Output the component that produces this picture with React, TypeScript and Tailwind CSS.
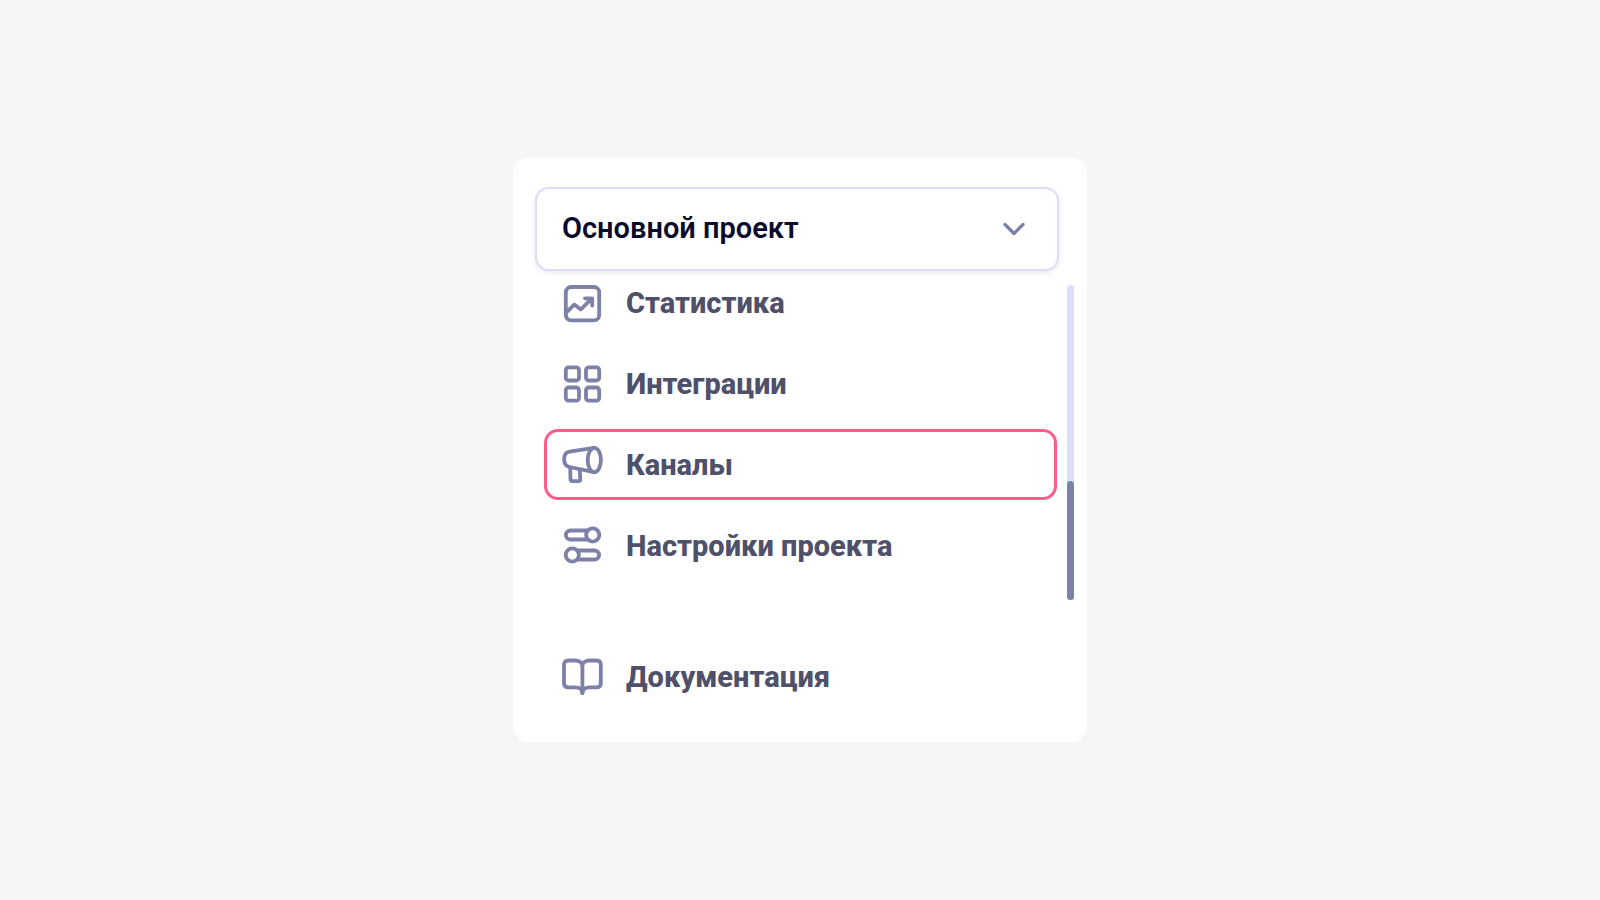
import React from "react";

type MenuItem = {
  id: string;
  title: string;
  icon: React.ReactNode;
  active?: boolean;
};

const Icon: React.FC<{ children: React.ReactNode }> = ({ children }) => (
  <svg
    className="size-[43px] shrink-0 text-[#7d80a8]"
    viewBox="0 0 43 43"
    fill="none"
    stroke="currentColor"
    strokeWidth="3.8"
    strokeLinecap="round"
    strokeLinejoin="round"
    aria-hidden="true"
  >
    {children}
  </svg>
);

const items: MenuItem[] = [
  {
    id: "stats",
    title: "Статистика",
    icon: (
      <Icon>
        <rect x="4.8" y="6" width="33.4" height="33.4" rx="5.4" />
        <path d="M5.5 31.3 L13.3 23.5 L19.8 28.5 L30.5 17.8 M24 17.3 H31.2 V24.5" />
      </Icon>
    ),
  },
  {
    id: "integrations",
    title: "Интеграции",
    icon: (
      <Icon>
        <rect x="4.8" y="5.3" width="13.2" height="13.2" rx="2.8" />
        <rect x="25" y="5.3" width="13.2" height="13.2" rx="2.8" />
        <rect x="4.8" y="25.5" width="13.2" height="13.2" rx="2.8" />
        <rect x="25" y="25.5" width="13.2" height="13.2" rx="2.8" />
      </Icon>
    ),
  },
  {
    id: "channels",
    title: "Каналы",
    active: true,
    icon: (
      <Icon>
        <ellipse cx="33.3" cy="17" rx="6.6" ry="12.2" />
        <path d="M33 4.8 L8.5 8.6 C5 9.2 3.1 12 3.1 16 C3.1 20.2 5 23.2 8.5 24 L33 29.2" />
        <path d="M9.2 24.5 L9.5 36.5 Q9.6 38.2 11.3 38.2 H17.6 Q19.4 38.2 19.3 36.5 L18.8 26.5" />
      </Icon>
    ),
  },
  {
    id: "settings",
    title: "Настройки проекта",
    icon: (
      <Icon>
        <circle cx="31.7" cy="11" r="6.6" />
        <path d="M26 6.5 H9.4 a4.5 4.5 0 0 0 0 9 H26" />
        <circle cx="11.3" cy="31" r="6.6" />
        <path d="M17 26.5 H33.6 a4.5 4.5 0 0 1 0 9 H17" />
      </Icon>
    ),
  },
];

const docs: MenuItem = {
  id: "docs",
  title: "Документация",
  icon: (
    <Icon>
      <path d="M21.4 10 C21.4 7.5 18 5.5 14 5.5 H7.5 Q3 5.5 3 9.8 V28.2 Q3 32.3 7.5 32.3 H14.5 C18.5 32.3 21.4 34.5 21.4 38" />
      <path d="M21.4 10 C21.4 7.5 24.8 5.5 28.8 5.5 H35.3 Q39.8 5.5 39.8 9.8 V28.2 Q39.8 32.3 35.3 32.3 H28.3 C24.3 32.3 21.4 34.5 21.4 38" />
      <path d="M21.4 10 V38" />
    </Icon>
  ),
};

const MenuLink: React.FC<{ item: MenuItem }> = ({ item }) => (
  <a
    href={`#${item.id}`}
    className={`flex h-[71px] shrink-0 items-center gap-[22px] rounded-[14px] border-3 px-[14px] text-[29px] leading-9 font-extrabold text-[#4f516b] ${
      item.active ? "border-[#ff5c8a]" : "border-transparent"
    }`}
  >
    {item.icon}
    {item.title}
  </a>
);

const App: React.FC = () => {
  return (
    <main className="flex min-h-screen items-center justify-center bg-[#f6f6f6] font-[Roboto,sans-serif]">
      <aside className="w-full max-w-[574px] rounded-2xl bg-white pt-[29px] pr-[13px] pb-[30px] pl-[22px]">
        <div className="mr-[15px] grid items-center">
          <select
            aria-label="Проект"
            className="col-start-1 row-start-1 h-[84px] appearance-none rounded-[14px] border-2 border-[#dcddf9] bg-white pr-16 pl-[25px] text-[29px] font-semibold text-[#0a0a2c] shadow-[0_2px_5px_rgba(40,40,90,0.1)]"
          >
            <option>Основной проект</option>
          </select>
          <svg
            className="pointer-events-none col-start-1 row-start-1 mr-[33px] size-6 justify-self-end text-[#7d80a8]"
            viewBox="0 0 24 24"
            fill="none"
            stroke="currentColor"
            strokeWidth="3.3"
            strokeLinecap="round"
            strokeLinejoin="round"
            aria-hidden="true"
          >
            <path d="M3 7.5 L12 16.5 L21 7.5" />
          </svg>
        </div>

        <div className="mt-[14px] flex h-[315px]">
          <nav className="ml-[9px] flex grow flex-col justify-end gap-[10px] overflow-hidden pb-[19px]">
            {items.map((item) => (
              <MenuLink key={item.id} item={item} />
            ))}
          </nav>
          <div className="ml-[10px] flex w-[7px] flex-col justify-end rounded-full bg-[#dcddf9]">
            <div className="h-[119px] rounded-full bg-[#7d80a8]" />
          </div>
        </div>

        <div className="mt-[41px] mr-[17px] ml-[9px]">
          <MenuLink item={docs} />
        </div>
      </aside>
    </main>
  );
};

export default App;
